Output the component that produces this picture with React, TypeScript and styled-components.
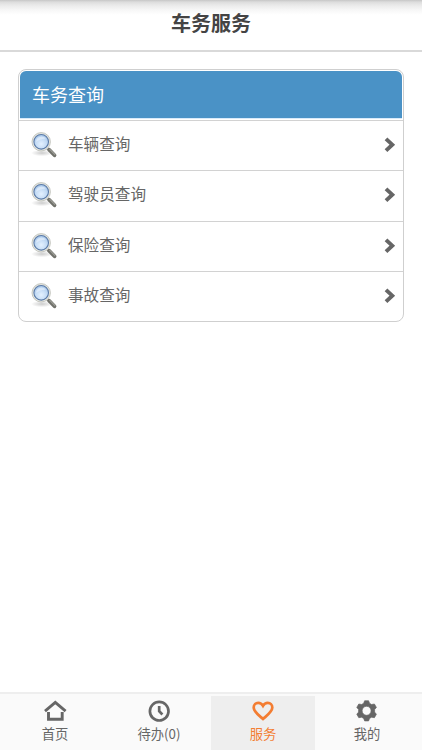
import React from "react";
import styled, { createGlobalStyle } from "styled-components";

const Global = createGlobalStyle`
  * { box-sizing: border-box; }
  body {
    margin: 0;
    background: #fff;
    font-family: Roboto, "Noto Sans CJK SC", sans-serif;
    color: #666;
  }
`;

const Screen = styled.div`
  height: 750px;
  display: flex;
  flex-direction: column;
  overflow: hidden;
`;

const TitleBar = styled.header`
  height: 52px;
  flex: none;
  display: flex;
  justify-content: center;
  padding-top: 9px;
  border-bottom: 2px solid #d9d9d9;
  background: linear-gradient(#c6c6c6 0, #dcdcdc 2px, #e9e9e9 5px, #f7f7f7 10px, #fff 15px);
`;

const Title = styled.h1`
  margin: 0;
  font-size: 20px;
  line-height: 30px;
  font-weight: 700;
  color: #444;
`;

const Content = styled.main`
  flex: 1;
  padding: 17px 18px 0;
`;

const Card = styled.section`
  height: 253px;
  display: flex;
  flex-direction: column;
  border: 1.5px solid #cfcfcf;
  border-radius: 8px;
  overflow: hidden;
`;

const CardHeading = styled.h2`
  height: 48px;
  flex: none;
  margin: 1px 1px 1px;
  padding: 0 12px;
  border: 0 solid #d8eafa;
  border-bottom-width: 1px;
  border-radius: 6px 6px 0 0;
  background: #4a92c6;
  color: #fff;
  font-size: 18px;
  font-weight: 400;
  line-height: 49px;
`;

const Row = styled.div`
  flex: 1;
  display: flex;
  align-items: center;
  border-top: 1.5px solid #d2d2d2;
  padding: 0 7px 1px 11px;
`;

const RowLabel = styled.span`
  flex: 1;
  margin-left: 10px;
  font-size: 15.6px;
  line-height: 24px;
`;

const TabBar = styled.nav`
  height: 58px;
  flex: none;
  display: flex;
  padding: 2px 3px 0;
  border-top: 2px solid #eee;
  background: #fafafa;
`;

const Tab = styled.div<{ $active?: boolean }>`
  flex: 1;
  display: flex;
  flex-direction: column;
  align-items: center;
  padding-top: 3px;
  background: ${(p) => (p.$active ? "#eee" : "transparent")};
  color: ${(p) => (p.$active ? "#f37d32" : "#666")};
`;

const TabLabel = styled.span`
  margin-top: 1px;
  font-family: "Noto Sans CJK SC", sans-serif;
  font-size: 13.3px;
  line-height: 20px;
  white-space: nowrap;
`;

const Magnifier = () => (
  <svg width="28" height="28" viewBox="0 0 28 28">
    <defs>
      <radialGradient id="lens" cx="50%" cy="65%" r="65%">
        <stop offset="0" stopColor="#e4f1ff" />
        <stop offset="0.55" stopColor="#c5dcf5" />
        <stop offset="1" stopColor="#a3c3e8" />
      </radialGradient>
      <radialGradient id="shade">
        <stop offset="0" stopColor="#000" stopOpacity="0.2" />
        <stop offset="1" stopColor="#000" stopOpacity="0" />
      </radialGradient>
    </defs>
    <ellipse cx="12" cy="22" rx="11" ry="3.2" fill="url(#shade)" />
    <path d="M17 17 20 20" stroke="#9a9a94" strokeWidth="2.5" />
    <path d="M19.200 18.800 24.500 24.300" stroke="#70716b" strokeWidth="3.8" strokeLinecap="round" />
    <path d="M19.800 18.400 24.900 23.600" stroke="#9c9d96" strokeWidth="1.2" strokeLinecap="round" />
    <circle cx="11.200" cy="10.800" r="9.200" fill="#e5e6e0" stroke="#c0c2bb" strokeWidth="0.9" />
    <circle cx="11.200" cy="10.800" r="7.300" fill="url(#lens)" stroke="#5b7ba8" strokeWidth="1.100" />
    <path d="M6.200 11.100C6 7.800 8.300 5.700 11.400 5.600c2 0 3.500.8 4.400 2.200-3.500-.2-6.600.8-9.600 3.300Z" fill="#eef6ff" opacity="0.55" />
  </svg>
);

const Chevron = () => (
  <svg width="12" height="18" viewBox="0 0 12 18">
    <path d="m2 2.800 6.300 5.900L2 14.600" fill="none" stroke="#666" strokeWidth="3.900" />
  </svg>
);

const HomeIcon = () => (
  <svg width="24" height="24" viewBox="0 0 24 24" fill="none" stroke="currentColor" strokeWidth="2.900">
    <path d="M2 12.100 12.300 3.500l10.300 8.600" />
    <path d="M5.500 13v7.200h13.700V13" />
  </svg>
);

const ClockIcon = () => (
  <svg width="24" height="24" viewBox="0 0 24 24" fill="none" stroke="currentColor" strokeWidth="2.700">
    <circle cx="12.200" cy="12.200" r="9.300" />
    <path d="M12.200 7v5.200l3.200 3.300" />
  </svg>
);

const HeartIcon = () => (
  <svg width="24" height="24" viewBox="0 0 24 24" fill="none" stroke="currentColor" strokeWidth="2.700">
    <path d="M12 20C8 16.400 2.700 12.800 2.700 8.500c0-2.800 2-4.600 4.500-4.600 2 0 3.700 1 4.800 2.900 1.100-1.900 2.800-2.900 4.800-2.900 2.500 0 4.500 1.800 4.500 4.600 0 4.300-5.300 7.900-9.300 11.500Z" />
  </svg>
);

const GearIcon = () => (
  <svg width="24" height="24" viewBox="0 0 24 24" fill="currentColor" stroke="currentColor" strokeWidth="0.700" strokeLinejoin="round">
    <path
      fillRule="evenodd"
      d="M9.600 1.800h4l.9 2.500 2.100 1.200 2.800-.5 2 3.400-1.800 2.100v2.600l1.800 2.100-2 3.500-2.800-.5-2.100 1.200-.9 2.500h-4l-.9-2.500-2.100-1.200-2.800.5-2-3.500 1.800-2.100v-2.600L1.800 8.400 3.800 5l2.800.5 2.100-1.200ZM11.600 7.300a4.500 4.500 0 1 0 0 9 4.500 4.500 0 0 0 0-9Z"
    />
  </svg>
);

const queries = ["车辆查询", "驾驶员查询", "保险查询", "事故查询"];

const tabs = [
  { label: "首页", Icon: HomeIcon },
  { label: "待办(0)", Icon: ClockIcon },
  { label: "服务", Icon: HeartIcon, active: true },
  { label: "我的", Icon: GearIcon },
];

export default function App() {
  return (
    <>
      <Global />
      <Screen>
        <TitleBar>
          <Title>车务服务</Title>
        </TitleBar>
        <Content>
          <Card>
            <CardHeading>车务查询</CardHeading>
            {queries.map((q) => (
              <Row key={q}>
                <Magnifier />
                <RowLabel>{q}</RowLabel>
                <Chevron />
              </Row>
            ))}
          </Card>
        </Content>
        <TabBar>
          {tabs.map(({ label, Icon, active }) => (
            <Tab key={label} $active={active}>
              <Icon />
              <TabLabel>{label}</TabLabel>
            </Tab>
          ))}
        </TabBar>
      </Screen>
    </>
  );
}
